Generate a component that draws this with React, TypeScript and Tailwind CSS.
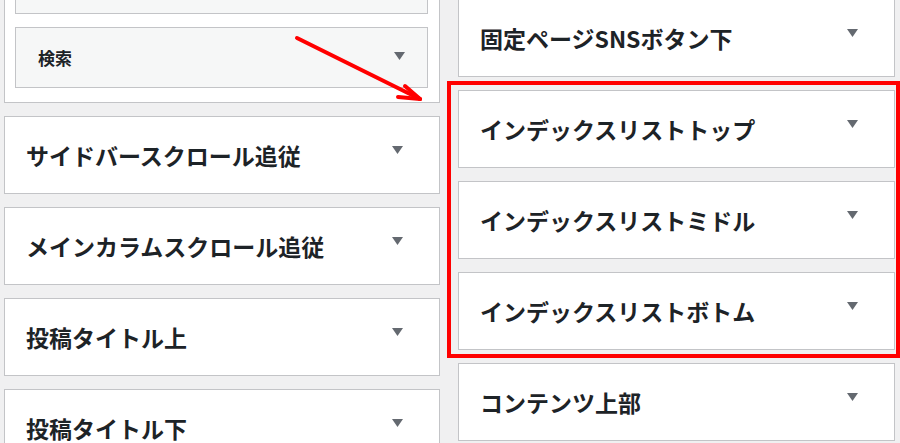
import React from 'react';

function Caret() {
    return (
        <svg width="11" height="8" viewBox="0 0 11 8" className="shrink-0">
            <polygon points="0,0 11,0 5.5,8" fill="#646970" />
        </svg>
    );
}

function Card({ label }: { label: string }) {
    return (
        <div className="flex h-[78px] shrink-0 justify-between border border-[#c3c4c7] bg-white pl-[21px] pr-[36px]">
            <span className="self-center pt-[1px] text-[23px] font-bold leading-none text-[#1d2327]">{label}</span>
            <div className="mt-[29px] self-start">
                <Caret />
            </div>
        </div>
    );
}

export default function App() {
    const leftItems = ['サイドバースクロール追従', 'メインカラムスクロール追従', '投稿タイトル上', '投稿タイトル下'];
    const rightItems = [
        '固定ページSNSボタン下',
        'インデックスリストトップ',
        'インデックスリストミドル',
        'インデックスリストボトム',
        'コンテンツ上部',
    ];

    return (
        <div
            className="relative flex h-[443px] w-[900px] gap-[18px] overflow-hidden bg-[#f0f0f1] pl-[4px]"
            style={{ fontFamily: "'Noto Sans CJK JP', 'Noto Sans', sans-serif" }}
        >
            <div className="flex w-[436px] shrink-0 flex-col gap-[13px]">
                <div className="mt-[-58px] flex shrink-0 flex-col gap-[13px] border border-[#c3c4c7] bg-white pt-[10px] pb-[14px] pl-[10px] pr-[11px]">
                    <div className="h-[61px] border border-[#c3c4c7] bg-[#f6f7f7]" />
                    <div className="flex h-[61px] justify-between border border-[#c3c4c7] bg-[#f6f7f7] pl-[22px] pr-[22px]">
                        <span className="self-center text-[17px] font-bold leading-none text-[#1d2327]">検索</span>
                        <div className="mt-[24px] self-start">
                            <Caret />
                        </div>
                    </div>
                </div>
                {leftItems.map((item) => (
                    <Card key={item} label={item} />
                ))}
            </div>

            <div className="mt-[-1px] flex w-[437px] shrink-0 flex-col gap-[13px]">
                {rightItems.map((item) => (
                    <Card key={item} label={item} />
                ))}
            </div>

            {/* annotation: red highlight box */}
            <div className="pointer-events-none absolute left-[447px] top-[81px] h-[277px] w-[453px] border-4 border-[#ff0000]" />

            {/* annotation: red arrow */}
            <svg
                className="pointer-events-none absolute left-0 top-0"
                width="900"
                height="443"
                viewBox="0 0 900 443"
            >
                <g stroke="#ff0000" strokeWidth="4" strokeLinecap="round" fill="none">
                    <line x1="297" y1="38" x2="420" y2="99" />
                    <line x1="405" y1="86" x2="420" y2="99" />
                    <line x1="398" y1="97" x2="420" y2="99" />
                </g>
            </svg>
        </div>
    );
}
